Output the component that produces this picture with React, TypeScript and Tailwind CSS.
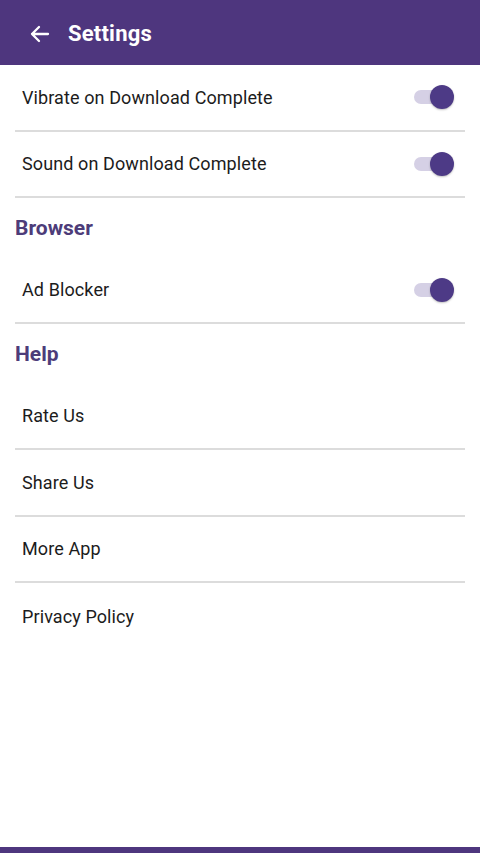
import React from "react";

const Toggle = () => (
  <div className="relative w-[40px] h-[24px] flex items-center shrink-0">
    <div className="w-[38px] h-[14px] rounded-full bg-[#d5d0e5]" />
    <div className="absolute right-0 top-0 w-[24px] h-[24px] rounded-full bg-[#4d3a86] shadow-[0_1px_2px_rgba(0,0,0,0.25)]" />
  </div>
);

const Row = ({ label, toggle, divider = true }: { label: string; toggle?: boolean; divider?: boolean }) => (
  <div className={`flex items-center justify-between h-[66.5px] pl-[7px] pr-[11px] ${divider ? "border-b-2 border-[#dcdcdc]" : ""}`}>
    <span className="text-[18px] tracking-[0.1px] text-[#1c1c1c]">{label}</span>
    {toggle && <Toggle />}
  </div>
);

const Section = ({ title }: { title: string }) => (
  <div className="h-[59.5px] flex items-center pt-[2px] text-[21px] font-bold text-[#4d3c79]">{title}</div>
);

export default function App() {
  return (
    <div className="relative w-[480px] h-[853px] bg-white flex flex-col" style={{ fontFamily: "Roboto, 'Liberation Sans', sans-serif" }}>
      <div className="h-[65px] bg-[#4e367e] flex items-center px-[28px] pt-[2px] gap-[16px] text-white">
        <svg width="24" height="24" viewBox="0 0 24 24" fill="none" stroke="white" strokeWidth="2.3" strokeLinecap="round" strokeLinejoin="round">
          <path d="M20 12H4M11 5l-7 7 7 7" />
        </svg>
        <span className="text-[22px] font-bold tracking-[0.2px]">Settings</span>
      </div>
      <div className="flex-1 px-[15px]">
        <Row label="Vibrate on Download Complete" toggle />
        <Row label="Sound on Download Complete" toggle />
        <Section title="Browser" />
        <Row label="Ad Blocker" toggle />
        <Section title="Help" />
        <Row label="Rate Us" />
        <Row label="Share Us" />
        <Row label="More App" />
        <Row label="Privacy Policy" divider={false} />
      </div>
      <div className="h-[6px] bg-[#4e367e]" />
    </div>
  );
}
